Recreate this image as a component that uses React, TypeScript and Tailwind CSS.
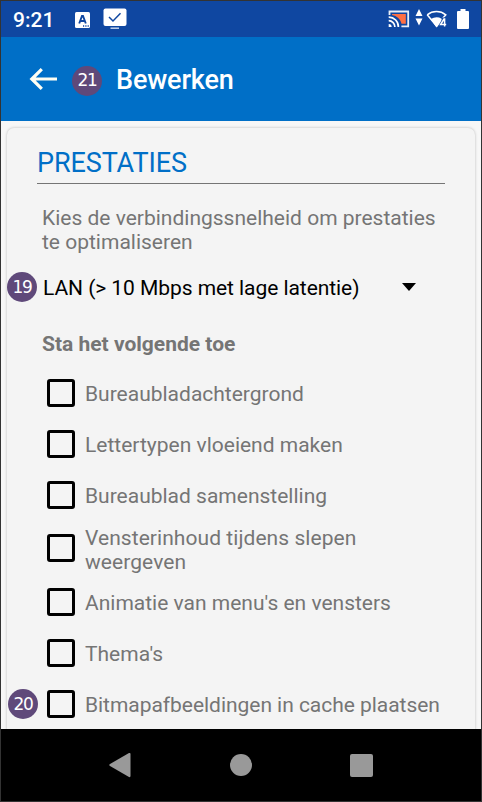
import type { ReactNode } from "react";

function Callout({ children, className = "" }: { children: ReactNode; className?: string }) {
  return (
    <span
      className={`flex h-[30px] w-[30px] shrink-0 items-center justify-center rounded-full bg-[#5f497a] font-['DejaVu_Sans',Verdana,sans-serif] text-[17px] leading-none tracking-[-1.2px] text-white ${className}`}
    >
      {children}
    </span>
  );
}

function StatusBar() {
  return (
    <div className="flex h-9 shrink-0 items-center bg-[#0f47a1] pl-3 text-white">
      <span className="w-[62px] pt-px text-[21px] leading-9 font-medium">9:21</span>
      <svg width="15" height="16" viewBox="0 0 15 16" className="mt-px">
        <rect width="15" height="16" rx="1.5" fill="white" />
        <path d="M4.2 11.5 7 4h1l2.8 7.5M5.4 9h4.2" fill="none" stroke="#0f47a1" strokeWidth="1.9" />
        <path d="M8 14h1.2M10.3 14h1.2M12.6 14h1.2" stroke="#0f47a1" strokeWidth="1.3" />
      </svg>
      <svg width="24" height="22" viewBox="0 0 24 22" className="ml-[13px]">
        <rect x="0.5" y="0.5" width="23" height="17.5" rx="2" fill="white" />
        <path d="M6 9 10 13 17.5 5.3" fill="none" stroke="#0f47a1" strokeWidth="1.5" />
        <path d="M7.5 20.200h8.5" stroke="#c3d3ee" strokeWidth="1.5" />
      </svg>
      <div className="ml-auto flex items-center pr-[12px]">
        <svg width="22" height="18" viewBox="0 0 22 18">
          <path d="M4 4h13.800v9.800h-4.300C12.500 9 9 6 4 5z" fill="#ff7043" />
          <path d="M1.500 5V1.500h18.700v14.800h-6.800" fill="none" stroke="#e9eff8" strokeWidth="1.800" />
          <path d="M.7 7.200a9.500 9.500 0 0 1 9.700 9.800M.7 10.700a6.200 6.200 0 0 1 6.200 6.300" fill="none" stroke="white" strokeWidth="1.700" />
          <path d="M.7 14.100a3 3 0 0 1 3 2.900h-3z" fill="white" />
        </svg>
        <svg width="8" height="17" viewBox="0 0 8 17" className="-mt-[3px] ml-[5px]">
          <path d="M4 0 7.500 7h-7zM.5 9.500h7L4 16.500z" fill="white" />
        </svg>
        <svg width="22" height="19" viewBox="0 0 22 19" className="-mt-px ml-[3px]">
          <path d="M1.200 5.800a15 15 0 0 1 18.600 0L17 9M1.200 5.800 10.500 17" fill="none" stroke="white" strokeWidth="1.500" />
          <path d="M4.800 10q5.700-3.300 10.800-.3v4L10.500 18.500z" fill="white" />
          <path d="M18.600 17.500v-7.500h-.6l-3.400 5.500h5.600" fill="none" stroke="#0f47a1" strokeWidth="2.800" />
          <path d="M18.600 17.500v-7.500h-.6l-3.400 5.500h5.600" fill="none" stroke="white" strokeWidth="1.500" />
        </svg>
        <svg width="12" height="20" viewBox="0 0 12 20" className="-mt-px ml-[9px]">
          <path d="M3.500 2V0h5v2H11a1 1 0 0 1 1 1v16a1 1 0 0 1-1 1H1a1 1 0 0 1-1-1V3a1 1 0 0 1 1-1z" fill="white" />
        </svg>
      </div>
    </div>
  );
}

function AppBar() {
  return (
    <header className="flex h-[84px] shrink-0 items-center bg-[#006fc7] pl-[28px] text-white">
      <svg width="28" height="22" viewBox="0 0 28 22" fill="none" stroke="#fffff4" strokeWidth="3.2">
        <path d="M28 11H3M12.8 1.2 2.8 11l10 9.8" />
      </svg>
      <Callout className="mt-[3px] ml-[15px]">21</Callout>
      <h1 className="mt-[2px] ml-[14px] text-[27px] leading-8 font-medium tracking-[-0.15px]">Bewerken</h1>
    </header>
  );
}

function Option({ label, tall = false, callout }: { label: ReactNode; tall?: boolean; callout?: string }) {
  return (
    <label className={`relative flex items-center pl-[40px] ${tall ? "h-14" : "h-[51px]"}`}>
      {callout && <Callout className="absolute top-[11px] left-px">{callout}</Callout>}
      <span className="h-[28px] w-[28px] shrink-0 rounded-[3px] border-[3px] border-black" />
      <span
        className={`ml-[10px] text-[21px] leading-6 text-[#757575] ${tall ? "pt-1 tracking-[0.06px]" : "pt-[2px]"} ${callout ? "tracking-[-0.04px]" : ""}`}
      >
        {label}
      </span>
    </label>
  );
}

function NavBar() {
  return (
    <nav className="flex h-[72px] shrink-0 items-center bg-black pl-[107px]">
      <svg width="23" height="26" viewBox="0 0 23 26" fill="#999">
        <path d="M2 12 21 1q1.500-.5 1.500 1v22q0 1.500-1.500 1L2 14q-1.500-1 0-2z" />
      </svg>
      <span className="ml-[99px] h-[22px] w-[22px] rounded-full bg-[#999]" />
      <span className="ml-[98px] h-[23px] w-[23px] rounded-[2px] bg-[#999]" />
    </nav>
  );
}

export default function App() {
  return (
    <div className="flex h-[802px] w-[482px] flex-col overflow-hidden border border-[#333] bg-[#f7f7f7] font-[Roboto,sans-serif]">
      <StatusBar />
      <AppBar />
      <main className="min-h-0 flex-1 overflow-hidden px-[6px] pt-[7px]">
        <section className="h-[640px] rounded-[7px] bg-[#f4f4f4] shadow-[0_0_3px_rgba(0,0,0,0.25)]">
          <h2 className="mx-[30px] h-[56px] border-b border-[#757575] pt-[19px] text-[27px] leading-8 tracking-[-0.1px] text-[#006fc7]">
            PRESTATIES
          </h2>
          <p className="mt-[22px] ml-[35px] text-[21px] leading-6 text-[#757575]">
            Kies de verbindingssnelheid om prestaties
            <br />
            te optimaliseren
          </p>
          <div className="relative mt-[18px] flex h-8 items-center pr-[59px] pl-9 text-[21px] text-black">
            <Callout className="absolute top-0 left-0">19</Callout>
            <span className="pt-[2px] tracking-[-0.06px]">LAN (&gt; 10 Mbps met lage latentie)</span>
            <svg width="14" height="8" viewBox="0 0 14 8" className="-mt-[3px] ml-auto">
              <path d="M0 0h14L7 8z" />
            </svg>
          </div>
          <h3 className="mt-[28px] ml-[35px] text-[21px] leading-6 font-bold text-[#757575]">Sta het volgende toe</h3>
          <div className="mt-[11px]">
            <Option label="Bureaubladachtergrond" />
            <Option label="Lettertypen vloeiend maken" />
            <Option label="Bureaublad samenstelling" />
            <Option
              tall
              label={
                <>
                  Vensterinhoud tijdens slepen
                  <br />
                  weergeven
                </>
              }
            />
            <Option label="Animatie van menu's en vensters" />
            <Option label="Thema's" />
            <Option label="Bitmapafbeeldingen in cache plaatsen" callout="20" />
          </div>
        </section>
      </main>
      <NavBar />
    </div>
  );
}
